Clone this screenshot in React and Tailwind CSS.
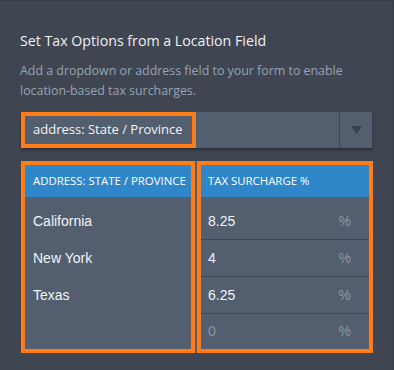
import React from "react";

const rows = [
  { state: "California", rate: "8.25" },
  { state: "New York", rate: "4" },
  { state: "Texas", rate: "6.25" },
];

export default function App() {
  return (
    <div className="w-[394px] h-[370px] bg-[#3f4652] border-t border-r border-[#363c46] pt-[28px] px-[20px] font-['Open_Sans',sans-serif]">
      <h2 className="text-[14.2px] leading-[24px] text-[#eef1f5]">Set Tax Options from a Location Field</h2>
      <p className="mt-[8px] text-[12.4px] leading-[20px] text-[#98a3b3]">
        Add a dropdown or address field to your form to enable location-based tax surcharges.
      </p>

      <div className="relative mt-[11px] ml-[1px] w-[351px] h-[36px] flex bg-[#535e6f] shadow-[0_2px_3px_rgba(0,0,0,0.35)]">
        <div className="flex-1 flex items-center pl-[12px] text-[13px] text-[#f2f4f7]">address: State / Province</div>
        <div className="w-[33px] border-l border-[#3f4652] flex items-center justify-center">
          <svg width="11" height="8" viewBox="0 0 11 8">
            <path d="M0 0 H11 L5.5 8 Z" fill="#3a414c" />
          </svg>
        </div>
        <div className="absolute left-0 top-0 w-[175px] h-[36px] border-4 border-[#ff7c17]" />
      </div>

      <div className="mt-[13px] ml-[1px] w-[352px] flex gap-[2px] bg-[#535e6f] font-['Liberation_Sans',sans-serif]">
        <div className="w-[174px] border-4 border-[#ff7c17]">
          <div className="h-[32px] bg-[#2f86c9] flex items-center pl-[8px] text-[11.4px] text-white font-['Open_Sans',sans-serif]">
            ADDRESS: STATE / PROVINCE
          </div>
          <div className="pt-[6px]">
            {rows.map((r) => (
              <div key={r.state} className="h-[37px] flex items-center pl-[8px] text-[14px] text-[#f2f4f7]">
                {r.state}
              </div>
            ))}
            <div className="h-[35px]" />
          </div>
        </div>
        <div className="flex-1 border-4 border-[#ff7c17]">
          <div className="h-[32px] bg-[#2f86c9] flex items-center pl-[7px] text-[11.4px] text-white font-['Open_Sans',sans-serif]">
            TAX SURCHARGE %
          </div>
          <div className="pt-[6px]">
            {rows.map((r) => (
              <div key={r.state} className="h-[37px] flex items-center justify-between pl-[7px] pr-[18px] border-b border-[#414856] text-[14px]">
                <span className="text-[#f2f4f7]">{r.rate}</span>
                <span className="text-[#8e98a7]">%</span>
              </div>
            ))}
            <div className="h-[35px] flex items-center justify-between pl-[7px] pr-[18px] text-[14px]">
              <span className="text-[#8e98a7]">0</span>
              <span className="text-[#8e98a7]">%</span>
            </div>
          </div>
        </div>
      </div>
    </div>
  );
}
